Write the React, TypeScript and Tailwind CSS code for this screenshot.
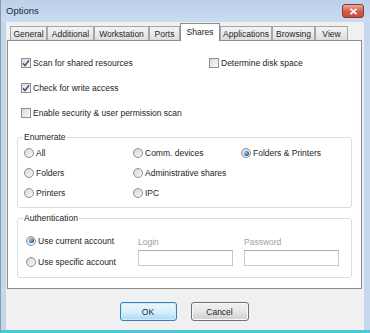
import React from 'react';

const Check = ({ checked, label }: { checked?: boolean; label: string }) => (
  <div className="flex items-center gap-[2px]">
    <span className="w-[10px] h-[10px] border border-[#8f8f8f] bg-gradient-to-br from-[#d9d9d9] to-[#fbfbfb] flex items-center justify-center">
      {checked && (
        <svg width="8" height="8" viewBox="0 0 8 8">
          <path d="M1 4.3 L3 6.6 L7 1.2" fill="none" stroke="#3a4f8a" strokeWidth="1.5" />
        </svg>
      )}
    </span>
    <span>{label}</span>
  </div>
);

const Radio = ({ checked, label }: { checked?: boolean; label: string }) => (
  <div className="flex items-center gap-[2px]">
    <span className="w-[10px] h-[10px] rounded-full border border-[#8f8f8f] bg-gradient-to-br from-[#d4d4d4] to-[#fafafa] flex items-center justify-center">
      {checked && (
        <span className="w-[5px] h-[5px] rounded-full bg-[radial-gradient(circle_at_35%_35%,#9fd3f5,#1f6fae_60%,#174f80)]" />
      )}
    </span>
    <span>{label}</span>
  </div>
);

const tabs = [
  { name: 'General', w: 'w-[37px]' },
  { name: 'Additional', w: 'w-[47px]' },
  { name: 'Workstation', w: 'w-[55px]' },
  { name: 'Ports', w: 'w-[31px]' },
  { name: 'Shares', w: 'w-[40px]', active: true },
  { name: 'Applications', w: 'w-[52px]' },
  { name: 'Browsing', w: 'w-[43px]' },
  { name: 'View', w: 'w-[33px]' },
];

export default function App() {
  return (
    <div className="w-[370px] h-[333px] flex flex-col bg-[#c4d7ec] border-l border-[#8a9bb0] text-[8.5px] leading-[10px] text-[#1e1e1e] font-['Liberation_Sans',Arial,sans-serif] overflow-hidden">
      {/* Title bar */}
      <div className="h-[22px] shrink-0 flex items-center justify-between pl-[5px] pr-[6px] bg-gradient-to-b from-[#bcd1ea] to-[#c9dbef]">
        <span className="text-[9.5px] text-[#1b2a3c]">Options</span>
        <div className="w-[22px] h-[14px] rounded-[3px] border border-[#8b3a2f] bg-gradient-to-b from-[#e8a99c] via-[#d3604d] to-[#c84a36] flex items-center justify-center">
          <svg width="9" height="7" viewBox="0 0 9 7">
            <path d="M1.5 0.8 L7.5 6.2 M7.5 0.8 L1.5 6.2" stroke="#ffffff" strokeWidth="1.8" />
          </svg>
        </div>
      </div>

      {/* Client area */}
      <div className="flex-1 ml-[5px] mr-[6px] bg-[#f0f0f0] flex flex-col pl-[1px] pr-[2px]">
        {/* Tabs */}
        <div className="h-[18px] shrink-0 flex items-end pl-[3px]">
          {tabs.map((t) =>
            t.active ? (
              <div
                key={t.name}
                className={`${t.w} h-[18px] -mb-px relative z-10 bg-white border border-b-0 border-[#898c95] flex items-center justify-center pb-[2px]`}
              >
                {t.name}
              </div>
            ) : (
              <div
                key={t.name}
                className={`${t.w} h-[14px] border border-b-0 border-[#a3a6ad] bg-gradient-to-b from-[#f3f3f3] via-[#ebebeb] to-[#dcdcdc] flex items-center justify-center`}
              >
                {t.name}
              </div>
            )
          )}
        </div>

        {/* Tab panel */}
        <div className="border border-[#898c95] bg-white pt-[9px] px-[9px] pb-[10px]">
          <div className="pl-[4px]">
            <div className="h-[25px] flex items-center">
              <div className="w-[188px]">
                <Check checked label="Scan for shared resources" />
              </div>
              <Check label="Determine disk space" />
            </div>
            <div className="h-[25px] flex items-center">
              <Check checked label="Check for write access" />
            </div>
            <div className="h-[25px] flex items-center">
              <Check label="Enable security & user permission scan" />
            </div>
          </div>

          <fieldset className="mt-[7px] border border-[#d5dfe5] rounded-[3px] pl-[5px] pb-[4px]">
            <legend className="px-[1px] leading-[10px]">Enumerate</legend>
            <div className="pl-[1px] pt-[1px] grid grid-cols-[109px_108px_1fr]">
              <div className="h-[20px] flex items-center"><Radio label="All" /></div>
              <div className="h-[20px] flex items-center"><Radio label="Comm. devices" /></div>
              <div className="h-[20px] flex items-center"><Radio checked label="Folders & Printers" /></div>
              <div className="h-[20px] flex items-center"><Radio label="Folders" /></div>
              <div className="h-[20px] flex items-center"><Radio label="Administrative shares" /></div>
              <div className="h-[20px]" />
              <div className="h-[20px] flex items-center"><Radio label="Printers" /></div>
              <div className="h-[20px] flex items-center"><Radio label="IPC" /></div>
              <div className="h-[20px]" />
            </div>
          </fieldset>

          <fieldset className="mt-[5px] border border-[#d5dfe5] rounded-[3px] pl-[5px] pb-[5px]">
            <legend className="px-[1px] leading-[10px]">Authentication</legend>
            <div className="flex items-start">
              <div className="w-[115px] pl-[3px] pt-[7px]">
                <div className="h-[21px] flex items-center"><Radio checked label="Use current account" /></div>
                <div className="h-[21px] flex items-center"><Radio label="Use specific account" /></div>
              </div>
              <div className="w-[95px] pt-[14px]">
                <div className="h-[10px] text-[#a0a0a0]">Login</div>
                <div className="mt-[3px] h-[16px] bg-white border border-[#c5c8cf] border-t-[#abadb3]" />
              </div>
              <div className="w-[95px] ml-[11px] pt-[14px]">
                <div className="h-[10px] text-[#a0a0a0]">Password</div>
                <div className="mt-[3px] h-[16px] bg-white border border-[#c5c8cf] border-t-[#abadb3]" />
              </div>
            </div>
          </fieldset>
        </div>

        {/* Buttons */}
        <div className="mt-[13px] flex justify-center gap-[14px] pr-[1px]">
          <button className="w-[57px] h-[19px] rounded-[3px] border border-[#3c7fb1] bg-gradient-to-b from-[#eaf6fd] via-[#d9f0fc] to-[#a7d9f5] shadow-[inset_0_0_0_1px_#cdebfb]">
            OK
          </button>
          <button className="w-[58px] h-[19px] rounded-[3px] border border-[#707070] bg-gradient-to-b from-[#f2f2f2] via-[#e6e6e6] to-[#cfcfcf] shadow-[inset_0_0_0_1px_#fafafa]">
            Cancel
          </button>
        </div>
      </div>

      <div className="h-[3px] shrink-0 bg-[#4ec6dc]" />
    </div>
  );
}
